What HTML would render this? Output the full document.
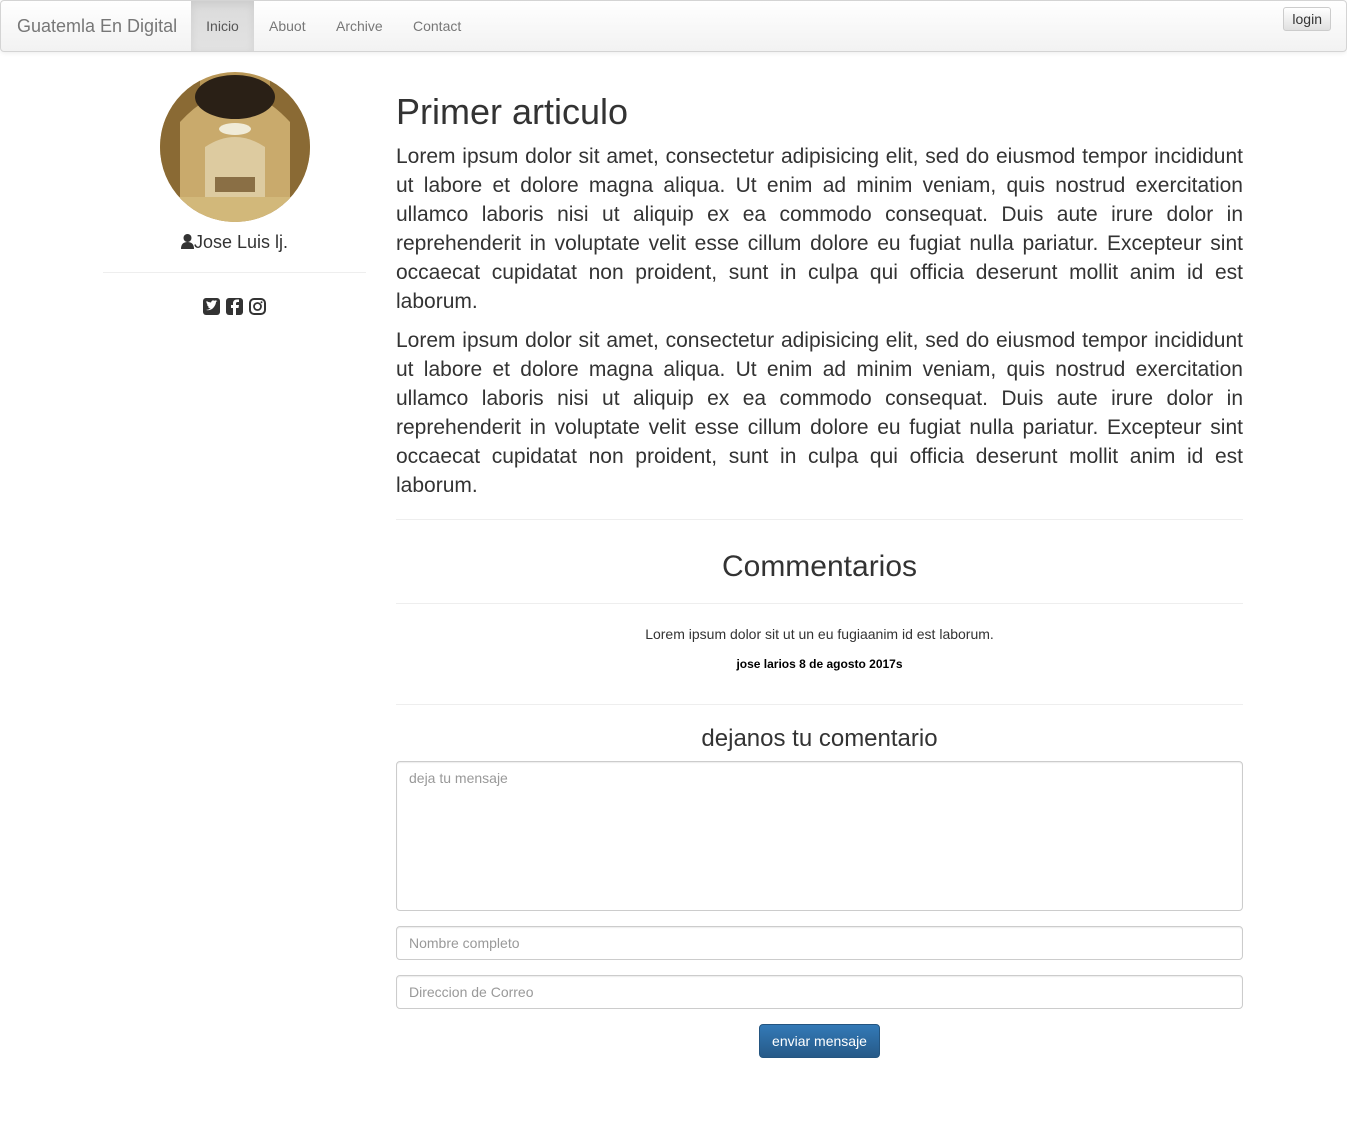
<!DOCTYPE html><html><head><style>
body{margin:0;font-family:"Liberation Sans",sans-serif;color:#333;font-size:14px;background:#fff}
.nav{position:absolute;left:0;top:0;width:1345px;height:50px;border:1px solid #d4d4d4;border-radius:4px;background:linear-gradient(#fff,#f2f2f2);box-shadow:0 1px 5px rgba(0,0,0,.08)}
.nav a{position:absolute;top:0;height:50px;line-height:50px;color:#777;text-decoration:none}
.brand{left:16px;font-size:18px}
.act{left:190px;width:63px;text-align:center;background:linear-gradient(#dbdbdb,#e2e2e2);box-shadow:inset 0 3px 9px rgba(0,0,0,.08)}
.login{position:absolute;right:15px;top:6px;border:1px solid #ccc;border-radius:3px;background:linear-gradient(#fff,#e0e0e0);font-size:14px;padding:3px 8px;color:#333}
.side{position:absolute;left:103px;width:263px;top:72px;text-align:center}
.main{position:absolute;left:396px;width:847px;top:0}
h1{font-size:36px;font-weight:500;margin:0;position:absolute;top:92px;line-height:40px}
.lead{font-size:21px;line-height:29px;text-align:justify;margin:0;position:absolute;width:847px}
hr{border:0;border-top:1px solid #eee;margin:0;position:absolute;width:847px;left:0}
.c{position:absolute;width:847px;text-align:center;left:0}
.f{position:absolute;left:0;border:1px solid #ccc;border-radius:4px;box-shadow:inset 0 1px 1px rgba(0,0,0,.075);color:#999;font-size:14px;padding:0 12px;box-sizing:border-box;width:847px}
</style></head><body>
<div class="nav"><a class="brand">Guatemla En Digital</a><a class="act" style="color:#555">Inicio</a><a style="left:268px">Abuot</a><a style="left:335px">Archive</a><a style="left:412px">Contact</a><span class="login">login</span></div>
<div class="side">
<svg width="150" height="150" viewBox="0 0 150 150" style="display:block;margin:0 auto">
<defs><clipPath id="cp"><circle cx="75" cy="75" r="75"/></clipPath></defs>
<g clip-path="url(#cp)">
<rect width="150" height="150" fill="#b89656"/>
<rect x="0" y="0" width="40" height="150" fill="#8a6a34"/>
<rect x="110" y="0" width="40" height="150" fill="#8a6a34"/>
<path d="M20 150 L20 50 Q75 -10 130 50 L130 150Z" fill="#c9aa6c"/>
<ellipse cx="75" cy="25" rx="40" ry="22" fill="#2a2016"/>
<ellipse cx="75" cy="57" rx="16" ry="6" fill="#f0ebd8"/>
<path d="M45 140 L45 75 Q75 55 105 75 L105 140Z" fill="#ddcba0"/>
<rect x="0" y="125" width="150" height="25" fill="#d2b87a"/>
<rect x="55" y="105" width="40" height="15" fill="#8a6f45"/>
</g></svg>
<div style="font-size:18px;margin-top:8px;line-height:24px"><svg width="13" height="15" viewBox="0 0 13 15" style="vertical-align:-1px"><circle cx="6.5" cy="4" r="4" fill="#333"/><path d="M0 15 Q0 8 6.5 8 Q13 8 13 15Z" fill="#333"/></svg>Jose Luis lj.</div>
<div style="border-top:1px solid #eee;margin-top:18px"></div>
<div style="margin-top:24px;height:18px">
<svg width="66" height="18" viewBox="0 0 66 18">
<rect x="1" y="1" width="17" height="17" rx="3" fill="#333"/>
<path d="M4 13 Q9 14 12 10 Q14 7 14 5 L15.5 4 L14 4.3 L14.8 3.2 Q13 3.5 12.5 3.8 Q10 2.5 9 5.5 Q6.5 5.5 4.5 4 Q4 6.5 6 7.5 L5 7.3 Q5.5 9.5 7 9.8 L6 10 Q7 11.5 8.5 11.5 Q6.5 12.8 4 13Z" fill="#fff"/>
<rect x="24" y="1" width="17" height="17" rx="3" fill="#333"/>
<path d="M34 18 L34 11 L36.5 11 L37 8 L34 8 L34 6.5 Q34 5 35.5 5 L37 5 L37 2.5 L35 2.5 Q31 2.5 31 6.5 L31 8 L29 8 L29 11 L31 11 L31 18Z" fill="#fff"/>
<rect x="48" y="2" width="15" height="15" rx="4" fill="none" stroke="#333" stroke-width="2"/>
<circle cx="55.5" cy="9.5" r="3.5" fill="none" stroke="#333" stroke-width="1.8"/>
<circle cx="59.5" cy="5.3" r="1" fill="#333"/>
</svg></div></div>
<div class="main">
<h1>Primer articulo</h1>
<p class="lead" style="top:142px">Lorem ipsum dolor sit amet, consectetur adipisicing elit, sed do eiusmod tempor incididunt ut labore et dolore magna aliqua. Ut enim ad minim veniam, quis nostrud exercitation ullamco laboris nisi ut aliquip ex ea commodo consequat. Duis aute irure dolor in reprehenderit in voluptate velit esse cillum dolore eu fugiat nulla pariatur. Excepteur sint occaecat cupidatat non proident, sunt in culpa qui officia deserunt mollit anim id est laborum.</p>
<p class="lead" style="top:326px">Lorem ipsum dolor sit amet, consectetur adipisicing elit, sed do eiusmod tempor incididunt ut labore et dolore magna aliqua. Ut enim ad minim veniam, quis nostrud exercitation ullamco laboris nisi ut aliquip ex ea commodo consequat. Duis aute irure dolor in reprehenderit in voluptate velit esse cillum dolore eu fugiat nulla pariatur. Excepteur sint occaecat cupidatat non proident, sunt in culpa qui officia deserunt mollit anim id est laborum.</p>
<hr style="top:519px">
<div class="c" style="top:549px;font-size:30px;line-height:36px">Commentarios</div>
<hr style="top:603px">
<div class="c" style="top:626px">Lorem ipsum dolor sit ut un eu fugiaanim id est laborum.</div>
<div class="c" style="top:657px;font-size:12px;font-weight:bold;color:#000">jose larios 8 de agosto 2017s</div>
<hr style="top:704px">
<div class="c" style="top:725px;font-size:24px;line-height:28px">dejanos tu comentario</div>
<div class="f" style="top:761px;height:150px;padding-top:8px">deja tu mensaje</div>
<div class="f" style="top:926px;height:34px;line-height:32px">Nombre completo</div>
<div class="f" style="top:975px;height:34px;line-height:32px">Direccion de Correo</div>
<div style="position:absolute;top:1024px;left:363px;width:121px;height:34px;box-sizing:border-box;border:1px solid #245580;border-radius:4px;background:linear-gradient(#337ab7,#265a88);color:#fff;text-align:center;line-height:32px">enviar mensaje</div>
</div></body></html>
